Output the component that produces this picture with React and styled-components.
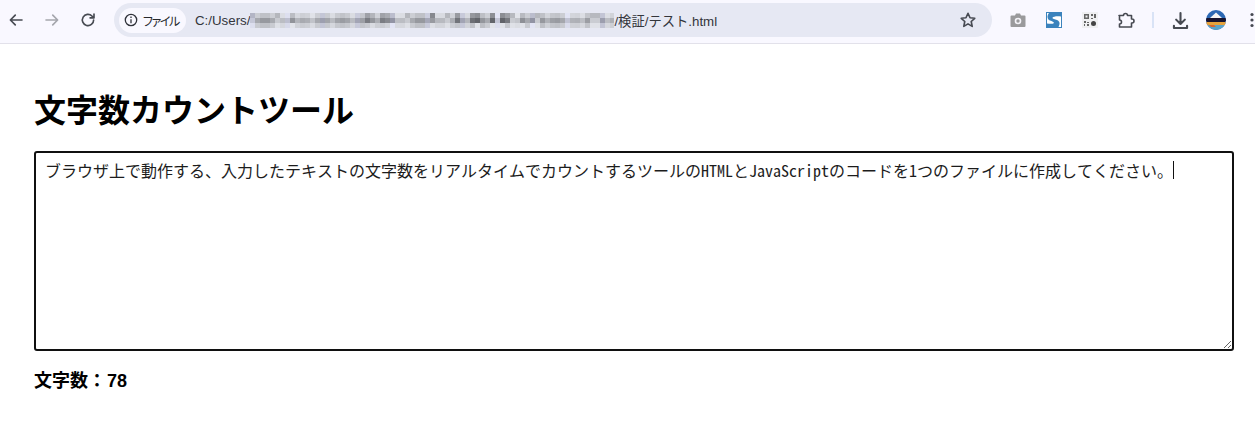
import { createGlobalStyle } from "styled-components";
import styled from "styled-components";

const text =
  "ブラウザ上で動作する、入力したテキストの文字数をリアルタイムでカウントするツールのHTMLとJavaScriptのコードを1つのファイルに作成してください。";

const GlobalStyle = createGlobalStyle`
  html, body { margin: 0; padding: 0; background: #fff; }
  body { font-family: "Liberation Sans", "Noto Sans CJK JP", sans-serif; }
`;

const Toolbar = styled.div`
  display: flex;
  align-items: center;
  height: 44px;
  padding: 3px 0 6px;
  box-sizing: border-box;
  background: #f9f8ff;
  border-bottom: 1px solid #e2e1ea;
`;
const NavButton = styled.div`
  width: 24px;
  height: 24px;
  margin-left: ${p => p.$ml || 0}px;
  display: flex;
  align-items: center;
  justify-content: center;
  color: ${p => p.$dim ? "#a5a6ad" : "#474a52"};
`;
const Omnibox = styled.div`
  width: 878px;
  height: 34px;
  margin-left: 14px;
  box-sizing: border-box;
  padding: 0 15px 0 5px;
  display: flex;
  align-items: center;
  background: #e6e8f3;
  border-radius: 17px;
`;
const Chip = styled.div`
  display: flex;
  align-items: center;
  gap: 5px;
  width: 67px;
  height: 25px;
  box-sizing: border-box;
  padding-left: 5px;
  background: #f9f8ff;
  border-radius: 13px;
  font-family: "Noto Sans CJK JP", sans-serif;
  font-feature-settings: "palt";
  font-size: 12px;
  letter-spacing: -1.4px;
  color: #26282d;
  white-space: nowrap;
  svg { flex: none; }
`;
const Url = styled.div`
  display: flex;
  align-items: center;
  margin-left: 9px;
  flex: 1;
  font-size: 13.3px;
  color: #33353b;
  white-space: nowrap;
`;
const Extensions = styled.div`
  display: flex;
  align-items: center;
  margin-left: 14px;
`;
const ExtIcon = styled.div`
  width: 24px;
  height: 24px;
  margin-right: ${p => p.$mr ?? 12}px;
  display: flex;
  align-items: center;
  justify-content: center;
  color: #474a52;
`;
const Divider = styled.div`
  width: 2px;
  height: 16px;
  margin-right: 14px;
  background: #d9e3f6;
`;
const Page = styled.main`
  padding: 45px 21px 0 34px;
`;
const Title = styled.h1`
  margin: 0 0 24px;
  font-size: 32px;
  line-height: 38px;
  font-weight: 700;
  color: #000;
  font-family: "Noto Sans CJK JP", sans-serif;
`;
const Field = styled.div`
  position: relative;
  height: 200px;
`;
const Input = styled.textarea`
  display: block;
  width: 100%;
  height: 100%;
  box-sizing: border-box;
  padding: 7px 9px 9px;
  margin: 0;
  border: 2px solid #101010;
  border-radius: 3px;
  outline: none;
  background: #fff;
  color: #1c1c1c;
  font-size: 16px;
  line-height: 20px;
  font-weight: 400;
  font-family: "Noto Sans Mono CJK JP", "Noto Sans CJK JP", monospace;
`;
const Caret = styled.span`
  position: absolute;
  left: 1139px;
  top: 10px;
  width: 1px;
  height: 18px;
  background: #111;
`;
const Count = styled.p`
  margin: 19px 0 0;
  font-size: 18px;
  line-height: 22px;
  font-weight: 700;
  color: #000;
`;
const CountValue = styled.span`
  margin-left: 1px;
`;

// tone of each mosaic row: top and bottom pale, middle darker
const blurTones = [
  [203, 30],
  [172, 38],
  [208, 24],
];
const darkCols = [22, 23, 24, 25, 26, 27, 36, 37, 40, 41, 44, 45, 48, 49, 50, 51];

function Blur({ width }) {
  // blurred part of the path, drawn as a mosaic
  const cell = 5;
  const rects = [];
  for (let y = 0; y < 3; y++) {
    const [base, spread] = blurTones[y];
    for (let x = 0; x * cell < width; x++) {
      const hash = ((x * 37 + y * 91 + x * x * 13) % 101) / 100 - 0.5;
      let v = Math.round(base + hash * spread * 1.6);
      if (y < 2 && darkCols.includes(x) && x % 3 !== 1) v -= 45;
      const b = Math.min(255, v + 8 + (x % 7 === 0 ? 10 : 0));
      rects.push(<rect key={`${x}-${y}`} x={x * cell} y={y * cell} width={cell} height={cell} fill={`rgb(${v},${v + 2},${b})`} />);
    }
  }
  return <svg width={width} height={15} style={{ display: "block" }}>{rects}</svg>;
}

const Icon = ({ children, size = 16, width = 2.2 }) => (
  <svg width={size} height={size} viewBox="0 0 24 24" fill="none" stroke="currentColor" strokeWidth={width} strokeLinecap="round" strokeLinejoin="round">
    {children}
  </svg>
);

export default function App() {
  return (
    <>
      <GlobalStyle />
      <Toolbar>
        <NavButton $ml={4}><Icon size={18}><path d="M20 12H5M11 5.500 4.500 12l6.500 6.500" /></Icon></NavButton>
        <NavButton $ml={12} $dim><Icon size={18}><path d="M4 12h15M13 5.500l6.500 6.500-6.500 6.500" /></Icon></NavButton>
        <NavButton $ml={12}><Icon size={18}><path d="M19.500 12a7.500 7.500 0 1 1-2.200-5.300L20 9.200M20 4v5.200h-5.200" /></Icon></NavButton>
        <Omnibox>
          <Chip>
            <svg width="14" height="14" viewBox="0 0 14 14" fill="none" stroke="#30323a" strokeWidth="1.300"><circle cx="7" cy="7" r="5.700" /><path d="M7 6.200v4M7 3.600v1.400" /></svg>
            ファイル
          </Chip>
          <Url>
            C:/Users/
            <Blur width={364} />
            /検証/テスト.html
          </Url>
          <svg width="18" height="18" viewBox="0 0 24 24" fill="none" stroke="#474a52" strokeWidth="2.200" strokeLinejoin="round"><path d="m12 3 2.700 6 6.300.7-4.700 4.300 1.300 6.500L12 17.200 6.400 20.500l1.300-6.500L3 9.700 9.300 9z" /></svg>
        </Omnibox>
        <Extensions>
          <ExtIcon>
            <svg width="16" height="14" viewBox="0 0 16 14"><path d="M1.500 2.500H5L6 .5h4l1 2h3.500a1 1 0 0 1 1 1V13a1 1 0 0 1-1 1h-13a1 1 0 0 1-1-1V3.500a1 1 0 0 1 1-1z" fill="#9a9a9c" /><circle cx="8" cy="8" r="3.300" fill="#f4f3f8" /><circle cx="8" cy="8" r="1.700" fill="#9a9a9c" /></svg>
          </ExtIcon>
          <ExtIcon>
            <svg width="16" height="16" viewBox="0 0 16 16"><rect x=".5" y=".5" width="15" height="15" fill="#fff" stroke="#3b83bd" /><path d="M1 1h14v3.500C11 4 7 4.500 6.500 5.800 6.300 7 9 7.200 11 8c3 1.200 3.200 3.800 1.500 7H1v-3.500c3 .5 6 .6 6.800-.5.500-1-1.800-1.500-3.800-2.400C1 7.200.8 3.800 3 1z" fill="#3b83bd" /></svg>
          </ExtIcon>
          <ExtIcon>
            <svg width="16" height="16" viewBox="0 0 16 16"><rect width="16" height="16" fill="#efeff1" /><path d="M2 2h5v5H2zM3.500 3.500h2v2h-2zM9 2h2v2H9zM12 2h2v4h-2zM9 6h2v1H9zM2 9h2v2H2zM5 10h2v1H5zM2 12h1v2H2zM5 12h2v2H5z" fill="#666" fillRule="evenodd" /><circle cx="11.500" cy="11.500" r="2.500" fill="#444" /></svg>
          </ExtIcon>
          <ExtIcon $mr={14}>
            <svg width="18" height="18" viewBox="0 0 18 18" fill="none" stroke="#474a52" strokeWidth="1.600" strokeLinejoin="round"><path d="M2 4.500h4.500a2 2 0 0 1 4 0H14.500v3.500h.5a2 2 0 0 1 0 4h-.5v4H2.500v-3a2 2 0 0 0 0-4V4.500z" /></svg>
          </ExtIcon>
          <Divider />
          <ExtIcon $mr={12}>
            <Icon size={21} width={2.4}><path d="M12 3.500v12.500M7 11l5 5 5-5M4.500 18v2.500h15V18" /></Icon>
          </ExtIcon>
          <ExtIcon $mr={22}>
            <svg width="20" height="20" viewBox="0 0 20 20"><defs><clipPath id="avatar"><circle cx="10" cy="10" r="10" /></clipPath></defs><g clipPath="url(#avatar)"><rect width="20" height="20" fill="#2c68b4" /><path d="M4 8l6-5.500L16 8z" fill="#f4f4f4" /><path d="M0 8h20v3l-3 2.500H2L0 11z" fill="#17132e" /><path d="M0 12h20v4H0z" fill="#e6a23c" /><path d="M0 15h20v5H0z" fill="#5ba3c9" /><path d="M3 15h5l2 2H5z" fill="#d9662c" /></g></svg>
          </ExtIcon>
          <svg width="4" height="16" viewBox="0 0 4 16" fill="#474a52"><circle cx="2" cy="2.500" r="1.600" /><circle cx="2" cy="8" r="1.600" /><circle cx="2" cy="13.500" r="1.600" /></svg>
        </Extensions>
      </Toolbar>
      <Page>
        <Title>文字数カウントツール</Title>
        <Field>
          <Input defaultValue={text} />
          <Caret />
        </Field>
        <Count>文字数：<CountValue>78</CountValue></Count>
      </Page>
    </>
  );
}
